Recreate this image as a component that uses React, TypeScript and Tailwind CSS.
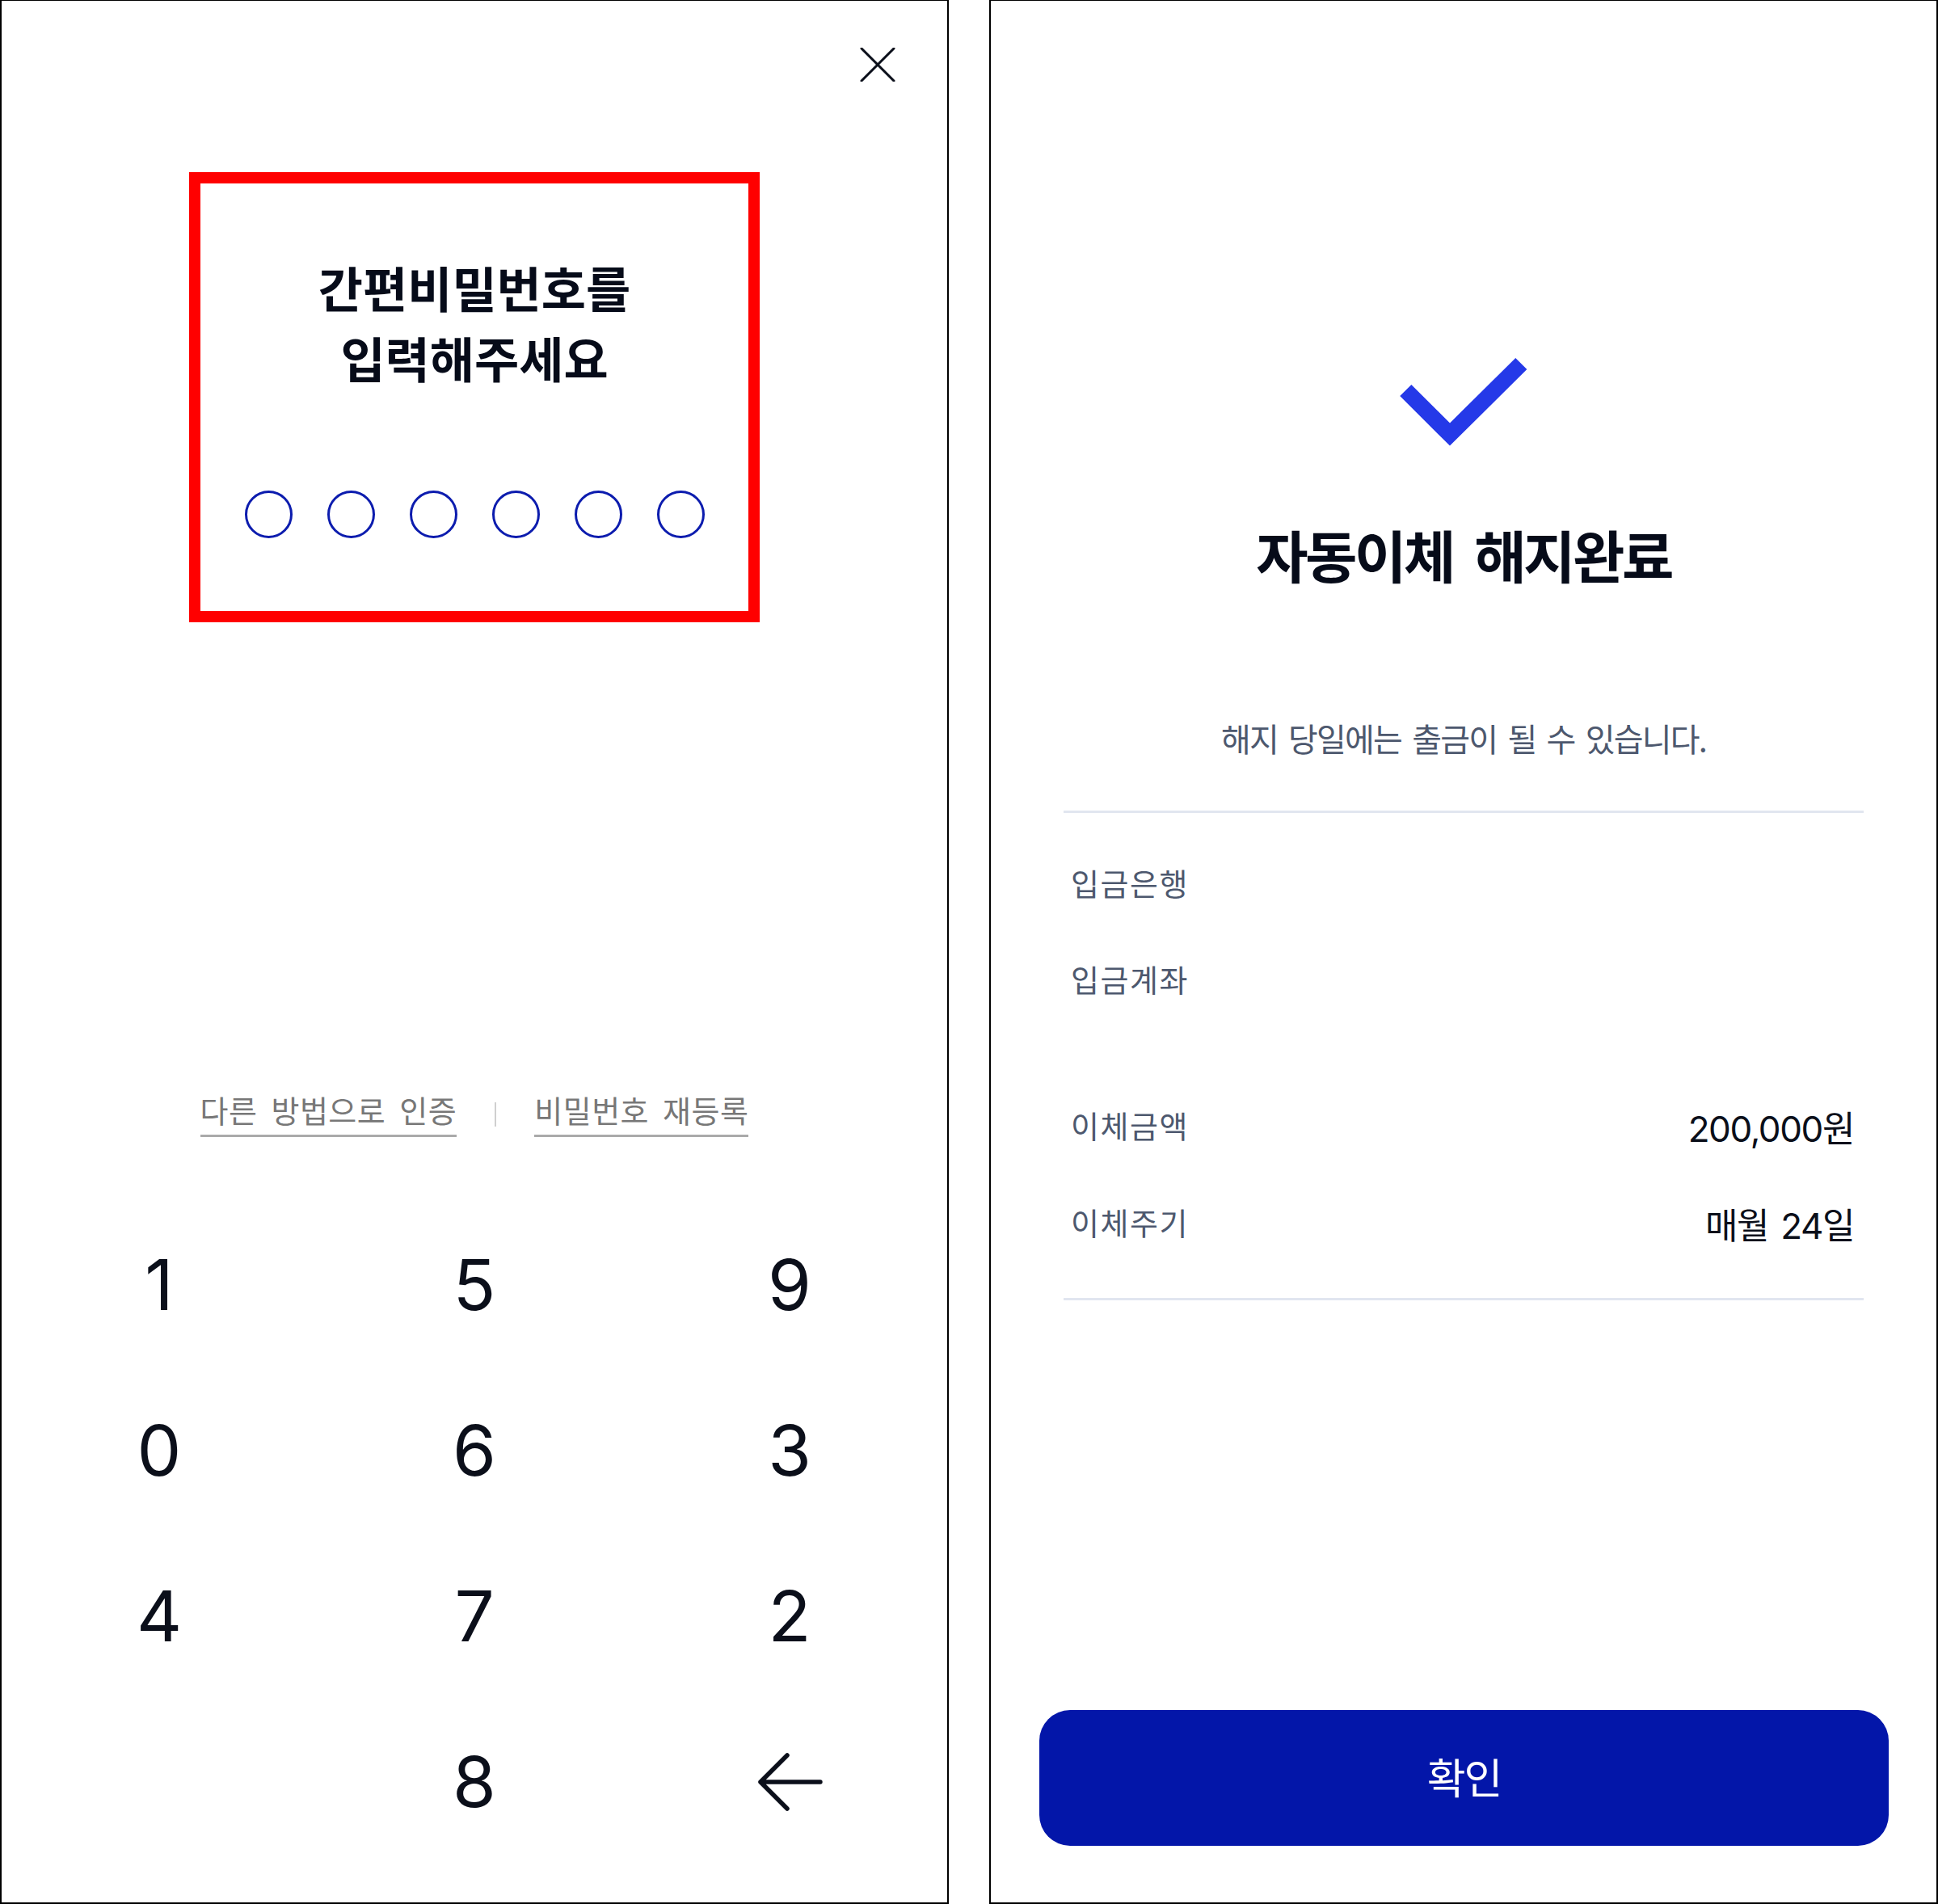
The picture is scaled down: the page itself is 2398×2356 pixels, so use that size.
import React from "react";

const KR = "font-['Noto_Sans_CJK_KR',sans-serif]";
const NUM = "font-['Inter','Noto_Sans_CJK_KR',sans-serif]";

function CloseIcon() {
  return (
    <svg width="44" height="42" viewBox="0 0 44 42" fill="none">
      <path d="M2 1 L42 41 M42 1 L2 41" stroke="#0b0f1a" strokeWidth="3" strokeLinecap="round" />
    </svg>
  );
}

function BackIcon() {
  return (
    <svg width="84" height="74" viewBox="0 0 84 74" fill="none">
      <path d="M6 37 H80 M39 4 L6 37 L39 70" stroke="#0b0f1a" strokeWidth="5.5" strokeLinecap="round" strokeLinejoin="round" />
    </svg>
  );
}

function CheckIcon() {
  return (
    <svg width="160" height="120" viewBox="0 0 160 120" fill="none">
      <polyline points="8.3,46 63,100.5 151.3,13" stroke="#2539e8" strokeWidth="20" strokeLinecap="butt" strokeLinejoin="miter" fill="none" />
    </svg>
  );
}

function PinPanel() {
  const keys = ["1", "5", "9", "0", "6", "3", "4", "7", "2", "", "8", "back"];
  return (
    <div className="flex flex-col w-[1174px] h-[2356px] border-2 border-t border-black bg-white">
      <div className="flex justify-end pt-[58px] pr-[64px]">
        <CloseIcon />
      </div>
      <div className="self-center mt-[112px] w-[706px] h-[557px] border-[14px] border-[#ff0000] flex flex-col items-center">
        <div className={`${KR} pt-[84px] text-[60px] leading-[87px] font-bold tracking-[0px] text-[#060b19] text-center`}>
          <div>간편비밀번호를</div>
          <div>입력해주세요</div>
        </div>
        <div className="flex gap-[43px] mt-[122px]">
          {[0, 1, 2, 3, 4, 5].map((i) => (
            <div key={i} className="w-[59px] h-[59px] rounded-full border-[3px] border-[#0c1cae]" />
          ))}
        </div>
      </div>
      <div className={`${KR} flex justify-center items-center gap-[47px] mt-[581px] text-[38px] leading-[44px] tracking-[0.5px] [word-spacing:8px] text-[#777777]`}>
        <div className="pb-[9px] border-b-[3px] border-[#aaaaaa]">다른 방법으로 인증</div>
        <div className="w-[2px] h-[30px] bg-[#d0d0d0]" />
        <div className="pb-[9px] border-b-[3px] border-[#aaaaaa]">비밀번호 재등록</div>
      </div>
      <div className={`${NUM} grid grid-cols-3 mt-[80px] text-[87px] leading-[205px] text-[#0b0f1a]`}>
        {keys.map((k, i) => (
          <div key={i} className="h-[205px] flex items-center justify-center">
            {k === "back" ? <BackIcon /> : k}
          </div>
        ))}
      </div>
    </div>
  );
}

function Row({ label, value, className }: { label: string; value?: string; className?: string }) {
  return (
    <div className={`flex justify-between items-center pl-[99px] pr-[102px] ${className ?? ""}`}>
      <div className={`${KR} text-[38px] leading-[44px] tracking-[1.5px] text-[#4d586e]`}>{label}</div>
      {value ? (
        <div className={`${NUM} mt-[5px] -mb-[5px] text-[44px] leading-[44px] tracking-[-1.4px] [word-spacing:4px] text-[#0b0f1a]`}>{value}</div>
      ) : null}
    </div>
  );
}

function DonePanel() {
  return (
    <div className="flex flex-col w-[1174px] h-[2356px] border-2 border-t border-black bg-white">
      <div className="self-center mt-[436px]">
        <CheckIcon />
      </div>
      <div className={`${KR} mt-[89px] text-center text-[70px] leading-[80px] font-bold tracking-[-3.5px] [word-spacing:14px] text-[#060b19]`}>
        자동이체 해지완료
      </div>
      <div className={`${KR} mt-[163px] text-center text-[40px] leading-[48px] tracking-[-1.8px] [word-spacing:6px] text-[#4d586e]`}>
        해지 당일에는 출금이 될 수 있습니다.
      </div>
      <div className="mt-[66px] mx-[90px] h-[3px] bg-[#e1e6f0]" />
      <Row label="입금은행" className="mt-[64px]" />
      <Row label="입금계좌" className="mt-[75px]" />
      <Row label="이체금액" value="200,000원" className="mt-[137px]" />
      <Row label="이체주기" value="매월 24일" className="mt-[76px]" />
      <div className="mt-[72px] mx-[90px] h-[3px] bg-[#e1e6f0]" />
      <div className="mt-auto mb-[70px] ml-[60px] mr-[59px] h-[168px] rounded-[38px] bg-[#0316a9] flex items-center justify-center">
        <span className={`${KR} text-[52px] leading-[60px] tracking-[-2px] text-white -mt-[4px]`}>확인</span>
      </div>
    </div>
  );
}

export default function App() {
  return (
    <div className="flex gap-[50px] w-[2398px] h-[2356px] bg-white">
      <PinPanel />
      <DonePanel />
    </div>
  );
}
